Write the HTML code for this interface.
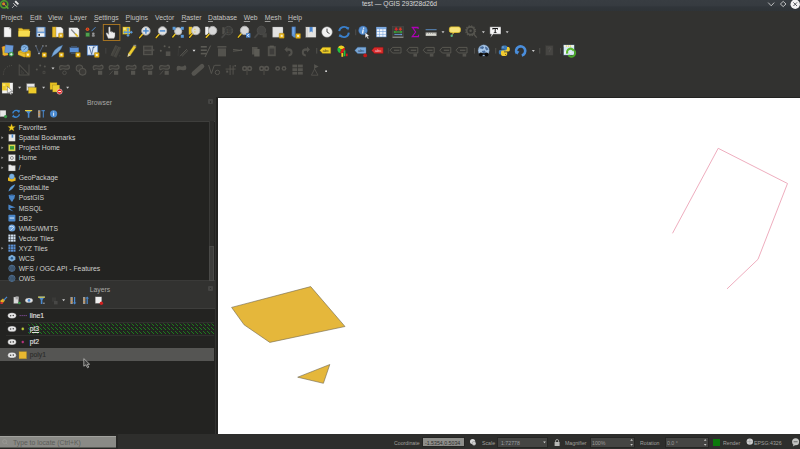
<!DOCTYPE html>
<html><head><meta charset="utf-8">
<style>
*{margin:0;padding:0;box-sizing:border-box}
html,body{width:800px;height:449px;overflow:hidden;background:#323230;font-family:"Liberation Sans",sans-serif}
.a{position:absolute}
.t{position:absolute;white-space:nowrap;line-height:10px;font-family:"Liberation Sans",sans-serif}
.mn{top:13.3px;font-size:6.8px;color:#c4c4c2}
.mn u{text-decoration-thickness:0.6px;text-underline-offset:1px;text-decoration-color:#9a9a98}
.bi{left:18.7px;font-size:6.8px;color:#cfcfcd}
.st{font-size:6.1px;transform:scaleX(0.86);transform-origin:0 0;top:437.8px}
svg{position:absolute;left:0;top:0;overflow:visible}
</style></head><body>
<!-- title bar -->
<div class="a" style="left:0;top:0;width:800px;height:11px;background:linear-gradient(#383d42 0,#363b40 5.5px,#30353a 7px,#2e3337 11px)"></div>
<span class="t" style="left:362px;top:-0.6px;font-size:6.7px;color:#d8d8d8">test — QGIS 293f28d26d</span>
<!-- menu bar -->
<span class="t mn" style="left:1px">Project</span><span class="t mn" style="left:30px"><u>E</u>dit</span><span class="t mn" style="left:48px"><u>V</u>iew</span><span class="t mn" style="left:70px"><u>L</u>ayer</span><span class="t mn" style="left:94px"><u>S</u>ettings</span><span class="t mn" style="left:125.6px"><u>P</u>lugins</span><span class="t mn" style="left:155px">Vec<u>t</u>or</span><span class="t mn" style="left:181.4px"><u>R</u>aster</span><span class="t mn" style="left:208px"><u>D</u>atabase</span><span class="t mn" style="left:243.8px"><u>W</u>eb</span><span class="t mn" style="left:264.8px"><u>M</u>esh</span><span class="t mn" style="left:288px"><u>H</u>elp</span>
<!-- dock panels -->
<div class="a" style="left:0;top:97px;width:217px;height:337px;background:#323230"></div>
<span class="t" style="left:87px;top:97.6px;font-size:6.8px;color:#a8a8a6">Browser</span>
<div class="a" style="left:208px;top:99.2px;width:5.2px;height:5.2px;background:#454543;border-radius:1px"></div><div class="a" style="left:210px;top:101.2px;width:1.4px;height:1.4px;background:#2e2e2c"></div>
<div class="a" style="left:0;top:120.6px;width:214.5px;height:160.6px;background:#232321;border-top:0.8px solid #3e3e3c;border-bottom:0.6px solid #3a3a38"></div>
<div class="a" style="left:208.8px;top:121.4px;width:5.3px;height:160px;background:#2c2c2a;border-left:0.5px solid #3a3a38"></div>
<div class="a" style="left:209.2px;top:246.4px;width:4.4px;height:34.4px;background:#3d3d3b;border:0.5px solid #4a4a48"></div>
<span class="t bi" style="top:123.10px">Favorites</span><span class="t bi" style="top:133.15px">Spatial Bookmarks</span><span class="t bi" style="top:143.20px">Project Home</span><span class="t bi" style="top:153.25px">Home</span><span class="t bi" style="top:163.30px">/</span><span class="t bi" style="top:173.35px">GeoPackage</span><span class="t bi" style="top:183.40px">SpatiaLite</span><span class="t bi" style="top:193.45px">PostGIS</span><span class="t bi" style="top:203.50px">MSSQL</span><span class="t bi" style="top:213.55px">DB2</span><span class="t bi" style="top:223.60px">WMS/WMTS</span><span class="t bi" style="top:233.65px">Vector Tiles</span><span class="t bi" style="top:243.70px">XYZ Tiles</span><span class="t bi" style="top:253.75px">WCS</span><span class="t bi" style="top:263.80px">WFS / OGC API - Features</span><span class="t bi" style="top:273.85px">OWS</span>
<span class="t" style="left:89.7px;top:284.6px;font-size:6.8px;color:#a8a8a6">Layers</span>
<div class="a" style="left:208px;top:285.5px;width:5.2px;height:5.2px;background:#454543;border-radius:1px"></div><div class="a" style="left:210px;top:287.5px;width:1.4px;height:1.4px;background:#2e2e2c"></div>
<div class="a" style="left:0;top:308px;width:214.5px;height:125.5px;background:#232321;border-top:0.8px solid #3e3e3c"></div>
<div class="a" style="left:6px;top:322.2px;width:208px;height:0.8px;background:#30302e"></div>
<div class="a" style="left:6px;top:334.6px;width:208px;height:0.8px;background:#30302e"></div>
<div class="a" style="left:6px;top:347.8px;width:208px;height:0.8px;background:#30302e"></div>
<div class="a" style="left:0;top:348.4px;width:213.8px;height:13px;background:#555553"></div>
<svg width="800" height="449"><defs><pattern id="gp" x="0" y="0" width="4" height="4" patternUnits="userSpaceOnUse"><rect width="4" height="4" fill="#222220"/><rect x="0" y="0" width="1" height="1" fill="#1e7a1e"/><rect x="1" y="1" width="1" height="1" fill="#1e7a1e"/><rect x="3" y="3" width="1" height="1" fill="#1e7a1e"/></pattern></defs>
<rect x="28" y="323.5" width="186.5" height="10.8" fill="url(#gp)"/>
</svg>
<span class="t" style="left:29.7px;top:310.6px;font-size:6.8px;color:#e2e2e0;-webkit-text-stroke:0.12px #e2e2e0">line1</span>
<span class="t" style="left:29.7px;top:323.9px;font-size:6.8px;color:#e2e2e0;-webkit-text-stroke:0.12px #e2e2e0;text-decoration:underline">pt3</span>
<span class="t" style="left:29.7px;top:337px;font-size:6.8px;color:#e2e2e0;-webkit-text-stroke:0.12px #e2e2e0">pt2</span>
<span class="t" style="left:29.7px;top:350.2px;font-size:6.8px;color:#2c2c2a;-webkit-text-stroke:0.1px #2c2c2a">poly1</span>
<!-- splitter + map -->
<div class="a" style="left:216.4px;top:96.9px;width:583.6px;height:337.1px;background:#232321"></div>
<div class="a" style="left:217.5px;top:97.6px;width:582.5px;height:336.4px;background:#ffffff"></div>
<svg width="800" height="449" viewBox="0 0 800 449">
<polygon points="231.6,307.4 310.7,286.6 345,326.5 269.8,342.4 244.1,324.8" fill="#e5b73b" stroke="#6e6650" stroke-width="0.6"/>
<polygon points="297.7,377.2 329.8,364.5 323.4,383.3" fill="#e5b73b" stroke="#6e6650" stroke-width="0.6"/>
<polyline points="672.5,233.3 718.2,148.3 787.5,183.5 758,259.3 727,288.9" fill="none" stroke="#eda9ba" stroke-width="0.95"/>
<path d="M3.8,26.9 L9.3,26.9 L11.4,29 L11.4,37.3 L3.8,37.3 Z" fill="#f4f4f4" stroke="#1a1a1a" stroke-width="0.4" />
<path d="M9.3,26.9 L9.3,29 L11.4,29" fill="#cfcfcf" stroke="#888" stroke-width="0.4" />
<path d="M18.4,28.2 L22,28.2 L23,29.2 L29.4,29.2 L29.4,36.6 L18.4,36.6 Z" fill="#e9c22e" stroke="#8a7010" stroke-width="0.4" />
<path d="M18.6,31 L30.2,31 L29.4,36.6 L18.4,36.6 Z" fill="#f6dc50" />
<rect x="36.2" y="26.9" width="9.3" height="10.1" rx="0.6" fill="#6a9ad2" stroke="#3a5a8a" stroke-width="0.4"/>
<rect x="37.6" y="27.6" width="6.5" height="4" rx="0" fill="#cdd2d8"/>
<rect x="37.4" y="33.2" width="6.9" height="3.4" rx="0" fill="#f2f2f2"/>
<rect x="38.4" y="34" width="1.6" height="1.8" rx="0" fill="#2a2a2a"/>
<rect x="52.2" y="26.9" width="5.2" height="10.3" rx="0" fill="#e9bd2c" stroke="#8a6a10" stroke-width="0.3"/>
<path d="M56,26.9 L61,26.9 L63.2,29 L63.2,37 L56,37 Z" fill="#f0f0f0" stroke="#555" stroke-width="0.3" />
<rect x="58.6" y="33.2" width="4.6" height="4.6" rx="0.6" fill="#e8b41a" stroke="#8a6a10" stroke-width="0.4"/>
<rect x="59.980000000000004" y="34.580000000000005" width="1.8399999999999999" height="1.8399999999999999" rx="0" fill="#f8f0c8"/>
<path d="M68.6,27.4 L77.2,27.4 L79.3,29.5 L79.3,37.2 L68.6,37.2 Z" fill="#f0f0f0" stroke="#222" stroke-width="0.4" />
<line x1="71.2" y1="29.5" x2="77.6" y2="36.4" stroke="#8a8a8a" stroke-width="1.3" stroke-linecap="butt"/>
<line x1="75.3" y1="33.8" x2="77.8" y2="36.6" stroke="#e6c020" stroke-width="1.6" stroke-linecap="butt"/>
<circle cx="87.5" cy="29.2" r="1.8" fill="#e06020"/>
<rect x="86.8" y="28.3" width="1.4" height="1.8" rx="0" fill="#c02020"/>
<line x1="91.5" y1="31.2" x2="95.5" y2="27.2" stroke="#4a8ad0" stroke-width="1" stroke-linecap="butt"/>
<rect x="85.8" y="32.8" width="3.8" height="3.8" rx="0" fill="#50a050" stroke="#2a6a2a" stroke-width="0.3"/>
<circle cx="93.3" cy="33.7" r="1.3" fill="#9a9a9a"/>
<rect x="91.8" y="34.8" width="3" height="2" rx="0.8" fill="#8a8a8a"/>
<rect x="101.3" y="29.6" width="1.2" height="4.8" rx="0" fill="#3e3e3c"/>
<rect x="103.3" y="24.5" width="16.6" height="16" rx="0" fill="#2b2b29" stroke="#b07a22" stroke-width="0.9"/>
<path d="M108.2,38.4 L106.2,34 C105.8,33.2 106.8,32.4 107.6,33.2 L108.6,34.4 L108.6,27.6 C108.6,26.6 110.2,26.6 110.2,27.6 L110.2,31.8 C110.4,31 111.8,31 111.8,31.8 L111.8,32.4 C112,31.6 113.4,31.6 113.4,32.4 L113.4,33 C113.6,32.2 115,32.2 115,33 L115,35.8 C115,37 114.4,37.8 114,38.4 Z" fill="#ececec" stroke="#7a7a7a" stroke-width="0.35" />
<rect x="122.7" y="26.9" width="7.4" height="7.4" rx="0" fill="#eccb2c" stroke="#6a5a10" stroke-width="0.3"/>
<rect x="123.4" y="27.6" width="2.4" height="2.4" rx="0" fill="#f6e27a"/>
<path d="M123.1,32.2 L125.1,30.400000000000002 L125.1,31.500000000000004 L127.3,31.500000000000004 L127.3,29.400000000000002 L126.2,29.400000000000002 L128,27.400000000000002 L129.8,29.400000000000002 L128.7,29.400000000000002 L128.7,31.500000000000004 L130.9,31.500000000000004 L130.9,30.400000000000002 L132.9,32.2 L130.9,34.0 L130.9,32.900000000000006 L128.7,32.900000000000006 L128.7,35.0 L129.8,35.0 L128,37.0 L126.2,35.0 L127.3,35.0 L127.3,32.900000000000006 L125.1,32.900000000000006 L125.1,34.0 Z" fill="#5b9ad8" />
<line x1="142.75" y1="34.05" x2="139.39000000000001" y2="37.83" stroke="#2a2518" stroke-width="2.4" stroke-linecap="round"/>
<line x1="142.54" y1="34.26" x2="139.6" y2="37.62" stroke="#e6c020" stroke-width="1.5" stroke-linecap="round"/>
<circle cx="145.9" cy="30.9" r="4.2" fill="#e2e2e2" stroke="#b4b4b4" stroke-width="0.9"/>
<rect x="143.1" y="30.2" width="5.6" height="1.4" rx="0" fill="#4a8ad0"/>
<rect x="145.2" y="28.1" width="1.4" height="5.6" rx="0" fill="#4a8ad0"/>
<line x1="159.35" y1="34.05" x2="155.99" y2="37.83" stroke="#2a2518" stroke-width="2.4" stroke-linecap="round"/>
<line x1="159.14" y1="34.26" x2="156.2" y2="37.62" stroke="#e6c020" stroke-width="1.5" stroke-linecap="round"/>
<circle cx="162.5" cy="30.9" r="4.2" fill="#e2e2e2" stroke="#b4b4b4" stroke-width="0.9"/>
<rect x="159.8" y="30.2" width="5.4" height="1.4" rx="0" fill="#4a8ad0"/>
<line x1="175.5" y1="33.9" x2="172.61999999999998" y2="37.14" stroke="#2a2518" stroke-width="2.4" stroke-linecap="round"/>
<line x1="175.32" y1="34.08" x2="172.79999999999998" y2="36.96" stroke="#e6c020" stroke-width="1.5" stroke-linecap="round"/>
<circle cx="178.2" cy="31.2" r="3.6" fill="#d6d6d6" stroke="#b4b4b4" stroke-width="0.9"/>
<rect x="172.6" y="26.8" width="3" height="3" rx="0" fill="#5a9ad8"/>
<rect x="180.8" y="26.8" width="3" height="3" rx="0" fill="#5a9ad8"/>
<rect x="180.8" y="34.8" width="3" height="3" rx="0" fill="#5a9ad8"/>
<rect x="188.8" y="26.8" width="3.2" height="7.8" rx="0" fill="#e8c020"/>
<line x1="192.72500000000002" y1="33.675000000000004" x2="189.44500000000002" y2="37.365" stroke="#2a2518" stroke-width="2.4" stroke-linecap="round"/>
<line x1="192.52" y1="33.88" x2="189.65" y2="37.160000000000004" stroke="#e6c020" stroke-width="1.5" stroke-linecap="round"/>
<circle cx="195.8" cy="30.6" r="4.1" fill="#dcdcd6" stroke="#b4b4b4" stroke-width="0.9"/>
<rect x="194.4" y="28.8" width="1" height="1" rx="0" fill="#e8c020"/>
<rect x="194.4" y="31.5" width="1" height="1" rx="0" fill="#e8c020"/>
<rect x="205.2" y="26.8" width="3.4" height="8" rx="0" fill="#eeeeee"/>
<line x1="209.45" y1="33.75" x2="206.09" y2="37.53" stroke="#2a2518" stroke-width="2.4" stroke-linecap="round"/>
<line x1="209.23999999999998" y1="33.96" x2="206.29999999999998" y2="37.32" stroke="#e6c020" stroke-width="1.5" stroke-linecap="round"/>
<circle cx="212.6" cy="30.6" r="4.2" fill="#d8d8d8" stroke="#b4b4b4" stroke-width="0.9"/>
<rect x="222.3" y="27.2" width="2.2" height="7" rx="0" fill="#53524d"/>
<line x1="225.35" y1="33.75" x2="221.99" y2="37.53" stroke="#3a3a38" stroke-width="2.4" stroke-linecap="round"/>
<line x1="225.14" y1="33.96" x2="222.2" y2="37.32" stroke="#4a4a48" stroke-width="1.5" stroke-linecap="round"/>
<circle cx="228.5" cy="30.6" r="4.2" fill="#3a3a38" stroke="#4e4e4c" stroke-width="0.9"/>
<text x="226" y="32.6" font-size="5" fill="#53524d" font-family="Liberation Sans">1:1</text>
<line x1="241.45" y1="33.55" x2="238.09" y2="37.33" stroke="#2a2518" stroke-width="2.4" stroke-linecap="round"/>
<line x1="241.23999999999998" y1="33.76" x2="238.29999999999998" y2="37.12" stroke="#e6c020" stroke-width="1.5" stroke-linecap="round"/>
<circle cx="244.6" cy="30.4" r="4.2" fill="#d6d6d6" stroke="#b4b4b4" stroke-width="0.9"/>
<rect x="246" y="33.2" width="4.4" height="4.4" rx="0" fill="#4a86d0"/>
<path d="M249.2,34.1 L247.2,35.4 L249.2,36.7" fill="none" stroke="#fff" stroke-width="0.8" />
<line x1="258.25" y1="33.55" x2="254.89" y2="37.33" stroke="#3a3a38" stroke-width="2.4" stroke-linecap="round"/>
<line x1="258.03999999999996" y1="33.76" x2="255.09999999999997" y2="37.12" stroke="#4a4a48" stroke-width="1.5" stroke-linecap="round"/>
<circle cx="261.4" cy="30.4" r="4.2" fill="#444442" stroke="#4e4e4c" stroke-width="0.9"/>
<rect x="262.6" y="33.2" width="4.2" height="4.2" rx="0" fill="#474744"/>
<path d="M272.6,27 L282.4,27 L283,27.6 L283,37.2 L272.6,37.2 Z" fill="#e2e2e2" stroke="#999" stroke-width="0.3" />
<rect x="279.2" y="33.3" width="5" height="5" rx="0.6" fill="#e8b41a" stroke="#8a6a10" stroke-width="0.4"/>
<rect x="280.7" y="34.8" width="2.0" height="2.0" rx="0" fill="#f8f0c8"/>
<path d="M291.8,26.8 L295.6,26.8 L295.6,34.6 L297.4,36.4 L297.4,37.6 L294,37.6 L291.8,35.6 Z" fill="#5b90d4" stroke="#3a6aa8" stroke-width="0.3" />
<rect x="292.6" y="27.4" width="1.2" height="7" rx="0" fill="#7aaae0"/>
<rect x="295.6" y="33.4" width="5" height="5" rx="0.6" fill="#e8b41a" stroke="#8a6a10" stroke-width="0.4"/>
<rect x="297.1" y="34.9" width="2.0" height="2.0" rx="0" fill="#f8f0c8"/>
<rect x="305.8" y="27" width="10.2" height="10.3" rx="0" fill="#e4e4e2" stroke="#888" stroke-width="0.3"/>
<rect x="306.4" y="27.4" width="1.4" height="9.6" rx="0" fill="#cfcfcd"/>
<path d="M309.6,27 L312.6,27 L312.6,32.6 L311.1,31.2 L309.6,32.6 Z" fill="#4a86d0" />
<circle cx="327" cy="32" r="5.3" fill="#f2f2f2" stroke="#8a8a8a" stroke-width="0.5"/>
<path d="M327,28.6 L327,32 L329.5,33.6" fill="none" stroke="#222" stroke-width="0.8" />
<path d="M339.2,31.2 A4.8,4.8 0 0 1 347.6,28.6" fill="none" stroke="#3a80cc" stroke-width="1.9" />
<path d="M348.8,32.6 A4.8,4.8 0 0 1 340.4,35.4" fill="none" stroke="#3a80cc" stroke-width="1.9" />
<path d="M346.2,26.6 L349.4,27.4 L348,30.4 Z" fill="#3a80cc" />
<path d="M341.8,37.4 L338.6,36.6 L340,33.6 Z" fill="#3a80cc" />
<rect x="355.2" y="29.4" width="1" height="5.8" rx="0" fill="#4e4e4c"/>
<circle cx="363" cy="30.4" r="4.4" fill="#5a92d2" stroke="#2a5a9a" stroke-width="0.4"/>
<path d="M362.6,29.6 L363.8,29.6 L363.2,33.4 L362,33.4 Z" fill="#fff" />
<circle cx="363.6" cy="28.2" r="0.65" fill="#fff"/>
<path d="M365.2,32.4 L365.2,38 L366.6,36.7 L367.8,39 L368.8,38.5 L367.6,36.2 L369.4,36 Z" fill="#f4f4f4" stroke="#333" stroke-width="0.3" />
<rect x="376.2" y="26.9" width="10.3" height="10.3" rx="0" fill="#6a9ad6"/>
<rect x="376.8" y="29.2" width="2.7" height="2.1" rx="0" fill="#f2f6fc"/>
<rect x="380.0" y="29.2" width="2.7" height="2.1" rx="0" fill="#f2f6fc"/>
<rect x="383.2" y="29.2" width="2.7" height="2.1" rx="0" fill="#f2f6fc"/>
<rect x="376.8" y="31.849999999999998" width="2.7" height="2.1" rx="0" fill="#f2f6fc"/>
<rect x="380.0" y="31.849999999999998" width="2.7" height="2.1" rx="0" fill="#f2f6fc"/>
<rect x="383.2" y="31.849999999999998" width="2.7" height="2.1" rx="0" fill="#f2f6fc"/>
<rect x="376.8" y="34.5" width="2.7" height="2.1" rx="0" fill="#f2f6fc"/>
<rect x="380.0" y="34.5" width="2.7" height="2.1" rx="0" fill="#f2f6fc"/>
<rect x="383.2" y="34.5" width="2.7" height="2.1" rx="0" fill="#f2f6fc"/>
<rect x="376.6" y="27.4" width="9.5" height="1.2" rx="0" fill="#8ab4e4"/>
<rect x="392.6" y="26.6" width="10.8" height="11" rx="0" fill="#3c3c3a" stroke="#4e4e4a" stroke-width="0.5"/>
<path d="M395.2,27.6 L397.2,27.6 L397.2,29 L398.2,29 L396.2,31 L394.2,29 L395.2,29 Z" fill="#d82a2a" />
<path d="M399.4,27.6 L401.4,27.6 L401.4,29 L402.4,29 L400.4,31 L398.4,29 L399.4,29 Z" fill="#d83a2a" />
<rect x="394.4" y="31.4" width="7.2" height="1.2" rx="0" fill="#3aa83a"/>
<path d="M393.4,32 L395.4,30.6 L395.4,33.4 Z M402.6,32 L400.6,30.6 L400.6,33.4 Z" fill="#3aa83a" />
<rect x="394.4" y="34.2" width="7.2" height="0.8" rx="0" fill="#6aa0e0"/>
<path d="M402.4,34.6 L400.8,33.6 L400.8,35.6 Z" fill="#6aa0e0" />
<rect x="392.6" y="36.6" width="10.8" height="1.3" rx="0" fill="#8a8a86"/>
<path d="M411.6,27.4 L418,27.4 L418.2,29 M417.6,27.6 L412.6,27.6 L415.6,32 L412.2,36.6 L418.4,36.6 L418.6,34.8" fill="none" stroke="#b000b8" stroke-width="1.15" />
<rect x="425.6" y="29.2" width="11" height="1" rx="0" fill="#5a8ac0"/>
<rect x="425.6" y="32.4" width="11" height="3.6" rx="0" fill="#dadad2" stroke="#444" stroke-width="0.3"/>
<rect x="426.6" y="32.5" width="0.45" height="1.4" rx="0" fill="#666"/>
<rect x="428.40000000000003" y="32.5" width="0.45" height="1.4" rx="0" fill="#666"/>
<rect x="430.20000000000005" y="32.5" width="0.45" height="1.4" rx="0" fill="#666"/>
<rect x="432.0" y="32.5" width="0.45" height="1.4" rx="0" fill="#666"/>
<rect x="433.8" y="32.5" width="0.45" height="1.4" rx="0" fill="#666"/>
<rect x="435.6" y="32.5" width="0.45" height="1.4" rx="0" fill="#666"/>
<path d="M441.5,31.299999999999997 L444.5,31.299999999999997 L443,33.3 Z" fill="#c8c8c8" />
<rect x="449.4" y="26.9" width="11" height="5.6" rx="1.8" fill="#f6e27a" stroke="#e8c830" stroke-width="0.8"/>
<path d="M452.8,32.2 L454.6,32.2 L452.2,35.2 Z" fill="#f0d050" />
<circle cx="451.7" cy="35.8" r="1.2" fill="#5ab080"/>
<circle cx="470.6" cy="30.8" r="3.9" fill="none" stroke="#56554f" stroke-width="1.7"/>
<circle cx="470.6" cy="30.8" r="4.9" fill="none" stroke="#56554f" stroke-width="1.2" stroke-dasharray="1.3 1.25"/>
<circle cx="470.6" cy="30.8" r="1.3" fill="#56554f"/>
<line x1="473.6" y1="34" x2="476.8" y2="37.6" stroke="#56554f" stroke-width="1.3" stroke-linecap="butt"/>
<path d="M481.9,31.299999999999997 L484.9,31.299999999999997 L483.4,33.3 Z" fill="#c8c8c8" />
<path d="M489.8,26.8 L501,26.8 L501,34.2 L493.2,34.2 L490.2,38.2 L491.4,34.2 L489.8,34.2 Z" fill="#f6f6f6" stroke="#1a1a1a" stroke-width="0.4" />
<rect x="492.6" y="28" width="5.2" height="1" rx="0" fill="#151515"/>
<rect x="492.6" y="28" width="0.7" height="1.8" rx="0" fill="#151515"/>
<rect x="497.1" y="28" width="0.7" height="1.8" rx="0" fill="#151515"/>
<rect x="494.7" y="28" width="1" height="4.8" rx="0" fill="#151515"/>
<rect x="493.8" y="32.2" width="2.8" height="0.7" rx="0" fill="#151515"/>
<path d="M505.7,31.299999999999997 L508.7,31.299999999999997 L507.2,33.3 Z" fill="#c8c8c8" />
<path d="M1.6,47 L5.6,45.6 L8,55 L3.8,56.2 Z" fill="#e07030" />
<rect x="2.6" y="46.6" width="5.2" height="8.6" rx="0" fill="#e8b828"/>
<path d="M5.4,44.8 L13.4,45.6 L12.6,53.4 L4.6,52.6 Z" fill="#6a9ad8" stroke="#3a5a90" stroke-width="0.3" />
<circle cx="11.2" cy="54.2" r="2.4" fill="#3a9a4a"/>
<rect x="9.8" y="53.8" width="2.8" height="0.8" rx="0" fill="#fff"/>
<rect x="10.8" y="52.8" width="0.8" height="2.8" rx="0" fill="#fff"/>
<path d="M18,51.4 L24.4,48.6 L30.6,51 L30.6,55.6 L24.2,57.2 L18,54.8 Z" fill="#e9bd2c" stroke="#8a6a10" stroke-width="0.3" />
<path d="M18,51.4 L24.2,53.6 L30.6,51" fill="none" stroke="#8a6a10" stroke-width="0.3" />
<circle cx="24.6" cy="48.4" r="3.7" fill="#8ab8e6" stroke="#3a6aa0" stroke-width="0.4"/>
<path d="M22.6,47.2 Q24.6,45.8 26.4,47.6 Q25,49.4 23.4,50.2" fill="none" stroke="#2a5a90" stroke-width="0.6" />
<rect x="25.4" y="52.2" width="5" height="5" rx="0.6" fill="#e8b41a" stroke="#8a6a10" stroke-width="0.4"/>
<rect x="26.9" y="53.7" width="2.0" height="2.0" rx="0" fill="#f8f0c8"/>
<rect x="35.2" y="45.2" width="1.4" height="1.4" rx="0" fill="#8a8a8a"/>
<rect x="42.2" y="45.2" width="1.4" height="1.4" rx="0" fill="#8a8a8a"/>
<rect x="45.4" y="45.2" width="1.4" height="1.4" rx="0" fill="#8a8a8a"/>
<path d="M36,46 L39,53.6 L42.8,46" fill="none" stroke="#5a7090" stroke-width="0.7" />
<rect x="38.4" y="53" width="1.2" height="1.2" rx="0" fill="#ddd"/>
<rect x="42" y="52.6" width="4.6" height="4.6" rx="0.6" fill="#e8b41a" stroke="#8a6a10" stroke-width="0.4"/>
<rect x="43.38" y="53.980000000000004" width="1.8399999999999999" height="1.8399999999999999" rx="0" fill="#f8f0c8"/>
<path d="M51.6,57 Q53.4,48 62.6,45.2 Q61,50.4 56.6,53.4 Q54.4,54.8 52.2,56.6 Z" fill="#7aa8d8" stroke="#3a6aa0" stroke-width="0.4" />
<rect x="59" y="52.4" width="4.8" height="4.8" rx="0.6" fill="#e8b41a" stroke="#8a6a10" stroke-width="0.4"/>
<rect x="60.44" y="53.839999999999996" width="1.92" height="1.92" rx="0" fill="#f8f0c8"/>
<rect x="69.8" y="47.6" width="9" height="4.6" rx="0" fill="#5b90d4" stroke="#3a5a90" stroke-width="0.3"/>
<rect x="71" y="46.2" width="6" height="0.6" rx="0" fill="#4a6a90"/>
<rect x="71" y="53.3" width="6" height="0.5" rx="0" fill="#4a6a90"/>
<rect x="75.6" y="52.4" width="4.8" height="4.8" rx="0.6" fill="#e8b41a" stroke="#8a6a10" stroke-width="0.4"/>
<rect x="77.03999999999999" y="53.839999999999996" width="1.92" height="1.92" rx="0" fill="#f8f0c8"/>
<rect x="87" y="45.2" width="11" height="10.2" rx="0" fill="#6a9ad8" stroke="#2a4a80" stroke-width="0.4"/>
<rect x="87.8" y="46" width="9.4" height="8.6" rx="0" fill="#dce8f6"/>
<path d="M89.4,47.2 L91.6,54.4 L93.6,46.4 M92.6,48 L95.4,46.6" fill="none" stroke="#2a4a80" stroke-width="0.7" />
<rect x="94.4" y="52.6" width="4.8" height="4.8" rx="0.6" fill="#e8b41a" stroke="#8a6a10" stroke-width="0.4"/>
<rect x="95.84" y="54.04" width="1.92" height="1.92" rx="0" fill="#f8f0c8"/>
<rect x="105.4" y="48" width="0.9" height="5.6" rx="0" fill="#474644"/>
<path d="M110.4,55.4 L115.4,45 L118.2,46.2 L113.2,56.6 Z M113.6,56.8 L118.4,46.4 L121.2,47.6 L116.4,57.8 Z" fill="#45443f" />
<path d="M111.4,54.6 L115.8,45.6 M114.6,56 L119,46.8" fill="none" stroke="#53524c" stroke-width="0.5" />
<rect x="119" y="55.6" width="1.4" height="0.6" rx="0" fill="#4a4a48"/>
<path d="M127.6,56.8 L128.2,53.4 L133.8,45.2 L136.4,46.8 L130.6,55.2 Z" fill="#eccc30" stroke="#6a5a20" stroke-width="0.4" />
<path d="M127.6,56.8 L128.2,53.4 L130.6,55.2 Z" fill="#d8d0b8" />
<rect x="133.6" y="44.8" width="2.6" height="1.4" rx="0" fill="#8a8a8a"/>
<rect x="143" y="45.6" width="10" height="9.6" rx="0" fill="#53524d"/>
<rect x="144.4" y="46.8" width="7" height="2.8" rx="0" fill="#3e3d3a"/>
<rect x="144.4" y="51" width="7" height="3" rx="0" fill="#3e3d3a"/>
<path d="M153,49 L155,50 L153,51 Z" fill="#53524d" />
<circle cx="164.6" cy="46.3" r="1" fill="#5c5b55"/>
<circle cx="169.2" cy="47.2" r="1" fill="#5c5b55"/>
<circle cx="160.8" cy="50.7" r="1" fill="#5c5b55"/>
<rect x="165.8" y="51.4" width="4.6" height="4.6" rx="0" fill="#53524d"/>
<circle cx="179.6" cy="47" r="1.1" fill="#5c5b55"/>
<line x1="180.2" y1="56.2" x2="186.8" y2="49.2" stroke="#5c5b55" stroke-width="1" stroke-linecap="butt"/>
<line x1="182.2" y1="56.2" x2="188" y2="50.4" stroke="#5c5b55" stroke-width="0.8" stroke-linecap="butt"/>
<line x1="178.6" y1="48.4" x2="178" y2="56" stroke="#434240" stroke-width="0.5" stroke-linecap="butt"/>
<path d="M192.5,49.8 L195.5,49.8 L194,51.8 Z" fill="#e0e0e0" />
<rect x="200.8" y="46.0" width="6" height="1.6" rx="0" fill="#5c5b55"/>
<rect x="200.8" y="49.4" width="6" height="1.6" rx="0" fill="#5c5b55"/>
<rect x="200.8" y="52.8" width="6" height="1.6" rx="0" fill="#5c5b55"/>
<line x1="205" y1="57" x2="210.6" y2="45.6" stroke="#5c5b55" stroke-width="1" stroke-linecap="butt"/>
<rect x="217.4" y="46" width="9" height="1.6" rx="0" fill="#53524d"/>
<rect x="218" y="48.4" width="8" height="8" rx="0" fill="#53524d"/>
<line x1="233" y1="49.4" x2="240.6" y2="50.4" stroke="#5c5b55" stroke-width="0.9" stroke-linecap="butt"/>
<line x1="233" y1="51.2" x2="240.6" y2="50.4" stroke="#5c5b55" stroke-width="0.9" stroke-linecap="butt"/>
<circle cx="241.4" cy="50" r="0.9" fill="#5c5b55"/>
<rect x="252" y="47" width="5.5" height="7.5" rx="0" fill="#53524d"/>
<rect x="254.2" y="49" width="5.4" height="7.5" rx="0" fill="#5c5b55"/>
<rect x="267.8" y="46.2" width="8" height="10" rx="0" fill="#53524d"/>
<rect x="269.6" y="45.6" width="4.2" height="1.6" rx="0" fill="#5c5b55"/>
<rect x="269.6" y="48.6" width="4.6" height="5.8" rx="0" fill="#3e3d3b"/>
<path d="M284.4,49.6 L287.4,46.6 L287.4,48.4 Q292.6,48 292.6,52.4 Q292.6,56 288.6,56.4 L288.6,54.6 Q290.6,54.2 290.6,52.2 Q290.4,50.4 287.4,50.8 L287.4,52.6 Z" fill="#53524d" />
<path d="M310,49.6 L307,46.6 L307,48.4 Q301.8,48 301.8,52.4 Q301.8,56 305.8,56.4 L305.8,54.6 Q303.8,54.2 303.8,52.2 Q304,50.4 307,50.8 L307,52.6 Z" fill="#53524d" />
<rect x="316.3" y="48" width="0.9" height="5.6" rx="0" fill="#555452"/>
<path d="M319.8,50.4 L322.6,47.2 L330.8,47.2 L330.8,53.4 L322.6,53.4 Z" fill="#f2d028" stroke="#6a5a10" stroke-width="0.4" />
<text x="322.6" y="51.9" font-size="4" fill="#3a3a20" font-family="Liberation Sans">abc</text>
<path d="M341.2,49.4 L337.91,47.50 A3.8,3.8 0 0 1 344.77,48.10 Z" fill="#f0d020" />
<path d="M341.2,49.4 L344.77,48.10 A3.8,3.8 0 0 1 339.90,52.97 Z" fill="#e01818" />
<path d="M341.2,49.4 L339.90,52.97 A3.8,3.8 0 0 1 337.91,47.50 Z" fill="#20c040" />
<rect x="341.4" y="53" width="1.8" height="3.8" rx="0" fill="#f0d020"/>
<rect x="343.8" y="50.4" width="1.6" height="5.8" rx="0" fill="#20c040"/>
<rect x="346" y="53.6" width="1.6" height="2.6" rx="0" fill="#e01818"/>
<path d="M354.8,50.4 L357.6,47.2 L366,47.2 L366,53.4 L357.6,53.4 Z" fill="#7aa8d8" stroke="#3a6aa0" stroke-width="0.4" />
<text x="358" y="51.9" font-size="4" fill="#1a3050" font-family="Liberation Sans">abc</text>
<circle cx="365.2" cy="55.4" r="1.9" fill="#c01818"/>
<path d="M371.6,50.4 L374.4,47.2 L383.2,47.2 L383.2,53.6 L374.4,53.6 Z" fill="#d82a2a" stroke="#7a1010" stroke-width="0.4" />
<text x="375" y="52" font-size="4" fill="#f8d8d8" font-family="Liberation Sans">abc</text>
<path d="M390,50.2 L392.6,47.4 L401,47.4 L401,53 L392.6,53 Z" fill="none" stroke="#5c5b55" stroke-width="0.9" />
<rect x="394" y="49.6" width="5.4" height="1.4" rx="0" fill="#53524d"/>
<path d="M406.8,50.2 L409.40000000000003,47.4 L417.8,47.4 L417.8,53 L409.40000000000003,53 Z" fill="none" stroke="#5c5b55" stroke-width="0.9" />
<rect x="410.8" y="49.6" width="5.4" height="1.4" rx="0" fill="#53524d"/>
<rect x="413.40000000000003" y="53.6" width="3.6" height="3" rx="0" fill="#53524d"/>
<path d="M423.2,50.2 L425.8,47.4 L434.2,47.4 L434.2,53 L425.8,53 Z" fill="none" stroke="#5c5b55" stroke-width="0.9" />
<rect x="427.2" y="49.6" width="5.4" height="1.4" rx="0" fill="#53524d"/>
<rect x="429.8" y="53.6" width="3.6" height="3" rx="0" fill="#53524d"/>
<path d="M439.8,50.2 L442.40000000000003,47.4 L450.8,47.4 L450.8,53 L442.40000000000003,53 Z" fill="none" stroke="#5c5b55" stroke-width="0.9" />
<rect x="443.8" y="49.6" width="5.4" height="1.4" rx="0" fill="#53524d"/>
<rect x="446.40000000000003" y="53.6" width="3.6" height="3" rx="0" fill="#53524d"/>
<path d="M456,50.2 L458.6,47.4 L467,47.4 L467,53 L458.6,53 Z" fill="none" stroke="#5c5b55" stroke-width="0.9" />
<rect x="460" y="49.6" width="5.4" height="1.4" rx="0" fill="#53524d"/>
<rect x="462.6" y="53.6" width="3.6" height="3" rx="0" fill="#53524d"/>
<rect x="387.9" y="48" width="0.9" height="5.6" rx="0" fill="#474644"/>
<rect x="474" y="48" width="0.9" height="5.6" rx="0" fill="#555452"/>
<circle cx="483.7" cy="50.4" r="5.6" fill="#a8c6e6" stroke="#5a7aa0" stroke-width="0.4"/>
<path d="M479.4,48.4 Q480.6,46 483,46.2 L484.2,47.6 L482.6,49.2 L481,48.6 Z M485,46.4 Q487.6,47 488.4,49.4 L486.6,50.6 L485.4,49 Z M481.8,51 L484.8,50.6 L486,52.4 L483,53.4 Z" fill="#4a6e9e" />
<circle cx="480.9" cy="54.6" r="2" fill="#0e0e0e"/>
<circle cx="486.5" cy="54.6" r="2" fill="#0e0e0e"/>
<rect x="481" y="53.2" width="5.5" height="1.6" rx="0" fill="#0e0e0e"/>
<rect x="495.3" y="48" width="0.9" height="5.6" rx="0" fill="#555452"/>
<path d="M504.4,45.6 C501.2,45.6 501.4,46.8 501.4,48.4 L501.4,49.4 L504.6,49.4 L504.6,50 L500.2,50 C498.8,50 498.8,51.4 498.8,52.6 C498.8,54.2 499.6,54.6 500.6,54.6 L501.6,54.6 L501.6,53 C501.6,51.8 502.4,51.2 503.4,51.2 L506.2,51.2 C507.2,51.2 507.6,50.6 507.6,49.6 L507.6,47.4 C507.6,46 506.4,45.6 504.4,45.6 Z" fill="#3d7ab8" />
<path d="M504.2,56 C507.4,56 507.2,54.8 507.2,53.2 L507.2,52.2 L504,52.2 L504,51.6 L508.4,51.6 C509.8,51.6 509.8,50.2 509.8,49 C509.8,47.4 509,47 508,47 L507,47 L507,48.6 C507,49.8 506.2,50.4 505.2,50.4 L502.4,50.4 C501.4,50.4 501,51 501,52 L501,54.2 C501,55.6 502.2,56 504.2,56 Z" fill="#f2cc30" />
<circle cx="503" cy="47" r="0.5" fill="#e8eef4"/>
<circle cx="505.6" cy="54.6" r="0.5" fill="#5a4a10"/>
<path d="M516.9,53.6 A4.6,4.6 0 1 1 521.8,55.4" fill="none" stroke="#4a8edc" stroke-width="2.6" />
<path d="M515.4,50.6 L519.4,51.4 L517.2,54.8 Z" fill="#4a8edc" />
<path d="M531.8,50 L534.8,50 L533.3,52 Z" fill="#c8c8c8" />
<rect x="539.3" y="48" width="0.9" height="5.6" rx="0" fill="#555452"/>
<rect x="545.6" y="45.6" width="7.5" height="9.7" rx="0" fill="#464542" stroke="#3a3a38" stroke-width="0.4"/>
<path d="M547.8,48.6 Q549.4,47 551,48.4 Q551,50 549.4,50.6 L549.4,52" fill="none" stroke="#555450" stroke-width="0.8" />
<rect x="560" y="48" width="0.9" height="5.6" rx="0" fill="#555452"/>
<rect x="563.4" y="44.8" width="11" height="10.4" rx="0" fill="#d4e6f4" stroke="#2a3a4a" stroke-width="0.5"/>
<rect x="563.8" y="45.2" width="10.2" height="1.6" rx="0" fill="#eef2e8"/>
<circle cx="566.4" cy="46" r="0.6" fill="#e8c020"/>
<circle cx="568.4" cy="46" r="0.6" fill="#e8c020"/>
<circle cx="570.4" cy="46" r="0.6" fill="#e8c020"/>
<path d="M564,52 L567,49.4 L569,51 L564,54.6 Z" fill="#f2f6fa" />
<path d="M567.4,53.6 A3.4,3.4 0 0 1 573.8,50.8" fill="none" stroke="#5ab82a" stroke-width="2.2" />
<path d="M574.4,50.6 A3.4,3.4 0 0 1 568.4,55.2" fill="none" stroke="#4aa82a" stroke-width="2" />
<circle cx="570.8" cy="52.4" r="0.9" fill="#f0f0f0"/>
<path d="M3.4,74.6 Q3.6,66.4 12,65.4" fill="none" stroke="#5a5954" stroke-width="0.9" stroke-dasharray="0.9 1.3"/>
<path d="M19.2,64.6 L19.2,75 L29,75 L29,64.6 M19.4,64.8 L28.8,74.6" fill="none" stroke="#4f4e49" stroke-width="1.1" />
<path d="M21.2,70.4 L21.2,73.2 L24,73.2 Z" fill="none" stroke="#4a4945" stroke-width="0.6" />
<circle cx="36.8" cy="69.6" r="1" fill="#575651"/>
<circle cx="40.2" cy="65.6" r="1" fill="#575651"/>
<circle cx="44.8" cy="66.6" r="1" fill="#575651"/>
<circle cx="44" cy="72.4" r="1.6" fill="#52514c"/>
<rect x="42" y="72" width="4" height="0.8" rx="0" fill="#3a3a37"/>
<rect x="43.6" y="70.4" width="0.8" height="4" rx="0" fill="#3a3a37"/>
<path d="M51.5,67.6 L54.5,67.6 L53,69.6 Z" fill="#d0d0d0" />
<path d="M59.6,67.39999999999999 Q59.6,65.19999999999999 62.85,65.72 Q65.6,66.83999999999999 67.8,65.16 Q69.4,65.19999999999999 69.4,67.39999999999999 Q69.4,69.6 65.6,69.08 Q62.3,68.24 60.65,69.64 Q59.6,69.6 59.6,67.39999999999999 Z" fill="#3b3a37" stroke="#55544f" stroke-width="1.2" />
<circle cx="64.5" cy="72.8" r="1.8" fill="none" stroke="#55544f" stroke-width="0.8"/>
<circle cx="79.4" cy="68.2" r="3.2" fill="#3b3a37" stroke="#55544f" stroke-width="1.1"/>
<circle cx="82.6" cy="71.8" r="3.3" fill="#3b3a37" stroke="#55544f" stroke-width="1.1"/>
<path d="M93.19999999999999,67.39999999999999 Q93.19999999999999,65.19999999999999 96.44999999999999,65.72 Q99.19999999999999,66.83999999999999 101.39999999999999,65.16 Q103.0,65.19999999999999 103.0,67.39999999999999 Q103.0,69.6 99.19999999999999,69.08 Q95.89999999999999,68.24 94.25,69.64 Q93.19999999999999,69.6 93.19999999999999,67.39999999999999 Z" fill="#3b3a37" stroke="#55544f" stroke-width="1.2" />
<rect x="98" y="70.8" width="4.2" height="4" rx="0" fill="#55544f"/>
<path d="M109.19999999999999,67.39999999999999 Q109.19999999999999,65.19999999999999 112.44999999999999,65.72 Q115.19999999999999,66.83999999999999 117.39999999999999,65.16 Q119.0,65.19999999999999 119.0,67.39999999999999 Q119.0,69.6 115.19999999999999,69.08 Q111.89999999999999,68.24 110.25,69.64 Q109.19999999999999,69.6 109.19999999999999,67.39999999999999 Z" fill="#3b3a37" stroke="#55544f" stroke-width="1.2" />
<rect x="114" y="70.8" width="4.2" height="4" rx="0" fill="#55544f"/>
<line x1="109.6" y1="74.6" x2="113" y2="70.6" stroke="#55544f" stroke-width="0.8" stroke-linecap="butt"/>
<path d="M126.19999999999999,67.39999999999999 Q126.19999999999999,65.19999999999999 129.45,65.72 Q132.2,66.83999999999999 134.4,65.16 Q136.0,65.19999999999999 136.0,67.39999999999999 Q136.0,69.6 132.2,69.08 Q128.9,68.24 127.25,69.64 Q126.19999999999999,69.6 126.19999999999999,67.39999999999999 Z" fill="#3b3a37" stroke="#55544f" stroke-width="1.2" />
<rect x="131" y="70.8" width="4.2" height="4" rx="0" fill="#55544f"/>
<path d="M143.0,67.39999999999999 Q143.0,65.19999999999999 146.25,65.72 Q149.0,66.83999999999999 151.20000000000002,65.16 Q152.8,65.19999999999999 152.8,67.39999999999999 Q152.8,69.6 149.0,69.08 Q145.70000000000002,68.24 144.05,69.64 Q143.0,69.6 143.0,67.39999999999999 Z" fill="#3b3a37" stroke="#55544f" stroke-width="1.2" />
<rect x="148" y="70.8" width="4.2" height="4" rx="0" fill="#55544f"/>
<path d="M159.6,67.39999999999999 Q159.6,65.19999999999999 162.85,65.72 Q165.6,66.83999999999999 167.8,65.16 Q169.4,65.19999999999999 169.4,67.39999999999999 Q169.4,69.6 165.6,69.08 Q162.3,68.24 160.65,69.64 Q159.6,69.6 159.6,67.39999999999999 Z" fill="#3b3a37" stroke="#55544f" stroke-width="1.2" />
<rect x="164.6" y="70.8" width="4.2" height="4" rx="0" fill="#55544f"/>
<line x1="160" y1="74.6" x2="163.4" y2="70.6" stroke="#55544f" stroke-width="0.8" stroke-linecap="butt"/>
<path d="M176.6,68.1 Q176.6,65.19999999999999 179.85,66.0 Q182.6,67.39999999999999 184.8,65.3 Q186.4,65.19999999999999 186.4,68.1 Q186.4,71.0 182.6,70.19999999999999 Q179.3,69.14999999999999 177.65,70.89999999999999 Q176.6,71.0 176.6,68.1 Z" fill="#55544f" />
<line x1="193.8" y1="73.4" x2="202" y2="66.2" stroke="#55544f" stroke-width="4.6" stroke-linecap="round"/>
<path d="M208.6,65 L211.4,73.6 L214.4,65" fill="none" stroke="#55544f" stroke-width="1" />
<rect x="215" y="64.8" width="5.6" height="1" rx="0" fill="#55544f"/>
<circle cx="217.4" cy="72.4" r="2.2" fill="none" stroke="#55544f" stroke-width="1"/>
<rect x="226.2" y="70.6" width="2" height="2" rx="0" fill="#55544f"/>
<rect x="229.6" y="65" width="1" height="10" rx="0" fill="#55544f"/>
<rect x="232.6" y="65.6" width="1" height="9" rx="0" fill="#55544f"/>
<rect x="225.6" y="68.6" width="10" height="0.9" rx="0" fill="#55544f"/>
<rect x="234.4" y="65" width="1.6" height="1.6" rx="0" fill="#55544f"/>
<circle cx="244.6" cy="68.4" r="2.6" fill="#55544f"/>
<circle cx="249.6" cy="68.4" r="2.6" fill="#55544f"/>
<circle cx="244.6" cy="68.4" r="1" fill="#2f2e2c"/>
<circle cx="249.6" cy="68.4" r="1" fill="#2f2e2c"/>
<rect x="246.6" y="66" width="0.8" height="9" rx="0" fill="#55544f"/>
<circle cx="261.6" cy="68.4" r="2.6" fill="#55544f"/>
<circle cx="266.6" cy="68.4" r="2.6" fill="#55544f"/>
<circle cx="261.6" cy="68.4" r="1" fill="#2f2e2c"/>
<circle cx="266.6" cy="68.4" r="1" fill="#2f2e2c"/>
<rect x="263.6" y="66" width="0.8" height="9" rx="0" fill="#55544f"/>
<circle cx="277.6" cy="68.4" r="2.4" fill="#55544f"/>
<circle cx="284" cy="68.4" r="2.4" fill="#55544f"/>
<circle cx="277.6" cy="68.4" r="0.9" fill="#2f2e2c"/>
<circle cx="284" cy="68.4" r="0.9" fill="#2f2e2c"/>
<rect x="292.4" y="64.6" width="4.8" height="2.8" rx="0" fill="#55544f"/>
<rect x="298.0" y="64.6" width="4.8" height="2.8" rx="0" fill="#55544f"/>
<rect x="292.4" y="68.19999999999999" width="4.8" height="2.8" rx="0" fill="#55544f"/>
<rect x="298.0" y="68.19999999999999" width="4.8" height="2.8" rx="0" fill="#55544f"/>
<rect x="292.4" y="71.8" width="4.8" height="2.8" rx="0" fill="#55544f"/>
<rect x="298.0" y="71.8" width="4.8" height="2.8" rx="0" fill="#55544f"/>
<path d="M314.6,64.4 L318.6,66.6 L314.6,68.6 Z" fill="#55544f" />
<path d="M314.6,69 L311.4,75.2 L318,75.2 Z" fill="none" stroke="#55544f" stroke-width="0.8" />
<rect x="314.2" y="64.4" width="0.8" height="5" rx="0" fill="#55544f"/>
<rect x="325.2" y="70.4" width="1.8" height="1.6" rx="0" fill="#d0d0d0"/>
<rect x="2" y="82.8" width="11" height="10.6" rx="0" fill="#f2f2f0" stroke="#555" stroke-width="0.3"/>
<rect x="2" y="82.8" width="7.8" height="7.6" rx="0" fill="#ecc92a"/>
<rect x="2.8" y="83.6" width="2.6" height="2.4" rx="0" fill="#f6e06a"/>
<rect x="5.8" y="86.8" width="2.6" height="2.4" rx="0" fill="#f6e06a"/>
<path d="M7.4,86.4 L7.4,93.6 L9.2,92 L10.6,94.8 L11.8,94.2 L10.4,91.6 L12.8,91.4 Z" fill="#f4f4f4" stroke="#333" stroke-width="0.4" />
<path d="M18.1,86.8 L21.1,86.8 L19.6,88.8 Z" fill="#c8c8c8" />
<rect x="26.6" y="83.6" width="8.2" height="7" rx="0" fill="#d6d6d6" stroke="#666" stroke-width="0.3"/>
<rect x="27.4" y="84.4" width="6.6" height="1.4" rx="0" fill="#eeeeee"/>
<rect x="27.4" y="86.6" width="6.6" height="0.6" rx="0" fill="#9a9a9a"/>
<rect x="28.4" y="87.4" width="8" height="6" rx="0" fill="#eecb2a" stroke="#7a6a20" stroke-width="0.3"/>
<path d="M42.1,86.8 L45.1,86.8 L43.6,88.8 Z" fill="#c8c8c8" />
<rect x="50" y="82.6" width="7" height="7" rx="0" fill="#e8c020" stroke="#7a6a20" stroke-width="0.3"/>
<rect x="52.6" y="85" width="7" height="7" rx="0" fill="#eccc30" stroke="#7a6a20" stroke-width="0.3"/>
<circle cx="59.6" cy="91.6" r="2.6" fill="#e02020" stroke="#fff" stroke-width="0.5"/>
<rect x="58.2" y="91.1" width="2.8" height="1" rx="0" fill="#fff"/>
<path d="M66.1,86.8 L69.1,86.8 L67.6,88.8 Z" fill="#c8c8c8" />
<rect x="0" y="110.2" width="6" height="6.6" rx="0" fill="#e8e8e8" stroke="#555" stroke-width="0.3"/>
<circle cx="5.6" cy="116.6" r="1.6" fill="#3a9a4a"/>
<path d="M12.8,113.4 A3.3,3.3 0 0 1 18.4,111.4" fill="none" stroke="#3a86d0" stroke-width="1.4" />
<path d="M19.4,114.2 A3.3,3.3 0 0 1 13.8,116.2" fill="none" stroke="#3a86d0" stroke-width="1.4" />
<path d="M17,109.8 L20.2,110.6 L18.8,113.2 Z" fill="#3a86d0" />
<path d="M15.2,117.8 L12,117 L13.4,114.4 Z" fill="#3a86d0" />
<path d="M25,110 L32.2,110 L29.4,113.6 L29.4,117.8 L27.8,117.8 L27.8,113.6 Z" fill="#4a8ad0" />
<rect x="25" y="110" width="7.2" height="1.2" rx="0" fill="#e8d040"/>
<rect x="38" y="110.2" width="2.4" height="7.4" rx="0" fill="#9a9a9a"/>
<rect x="38.6" y="111.6" width="1.2" height="1.2" rx="0" fill="#e89020"/>
<rect x="38.6" y="114.6" width="1.2" height="1.2" rx="0" fill="#e89020"/>
<rect x="41.4" y="110.2" width="3.6" height="1" rx="0" fill="#4a8ad0"/>
<rect x="42.8" y="110.2" width="1" height="7.4" rx="0" fill="#4a8ad0"/>
<circle cx="53.6" cy="113.8" r="3.6" fill="#4a8ad0"/>
<rect x="53.1" y="113" width="1" height="2.8" rx="0" fill="#e8f0f8"/>
<rect x="53.1" y="111.6" width="1" height="0.8" rx="0" fill="#e8f0f8"/>
<path d="M0,301 L3,298.6 L5,300.6 L2.4,303.6 Z" fill="#e8b020" />
<line x1="3.6" y1="300.4" x2="7" y2="296.8" stroke="#4a8ad0" stroke-width="1.2" stroke-linecap="butt"/>
<rect x="0.4" y="302" width="2.4" height="2" rx="0" fill="#d03030"/>
<rect x="13.6" y="297" width="5" height="6.6" rx="0" fill="#d8d8d8" stroke="#555" stroke-width="0.3"/>
<rect x="15.6" y="296.4" width="3" height="3" rx="0" fill="#aaa"/>
<circle cx="19.4" cy="303" r="1.3" fill="#3a9a4a"/>
<ellipse cx="29" cy="300.4" rx="3.8" ry="2.3" fill="#e8e8e8" stroke="#555" stroke-width="0.3"/>
<circle cx="29" cy="300.4" r="1.4" fill="#4a8ad0"/>
<path d="M38,296.6 L45,296.6 L42.4,300 L42.4,304 L40.8,304 L40.8,300 Z" fill="#4a8ad0" />
<rect x="38" y="296.6" width="7" height="1.1" rx="0" fill="#e8d040"/>
<rect x="43.2" y="302.6" width="1.4" height="1.4" rx="0" fill="#9a9a9a"/>
<rect x="52" y="297.4" width="4" height="4.4" rx="0" fill="#3a3a38"/>
<rect x="54" y="301" width="3.6" height="3.4" rx="0" fill="#484846"/>
<path d="M62.1,299.2 L65.1,299.2 L63.6,301.2 Z" fill="#c8c8c8" />
<rect x="70.4" y="297" width="2.4" height="7" rx="0" fill="#9a9a9a"/>
<rect x="71" y="298.4" width="1.2" height="1.2" rx="0" fill="#e89020"/>
<rect x="71" y="301.4" width="1.2" height="1.2" rx="0" fill="#e89020"/>
<path d="M74,297 L74,302.4 L72.8,302.4 L74.6,304.4 L76.4,302.4 L75.2,302.4 L75.2,297 Z" fill="#4a8ad0" />
<rect x="83" y="297" width="2.4" height="7" rx="0" fill="#9a9a9a"/>
<rect x="83.6" y="298.4" width="1.2" height="1.2" rx="0" fill="#e89020"/>
<rect x="83.6" y="301.4" width="1.2" height="1.2" rx="0" fill="#e89020"/>
<path d="M86.6,304 L86.6,298.6 L85.4,298.6 L87.2,296.6 L89,298.6 L87.8,298.6 L87.8,304 Z" fill="#4a8ad0" />
<rect x="95.2" y="296.8" width="6.6" height="6.6" rx="0" fill="#eeeeee" stroke="#555" stroke-width="0.3"/>
<circle cx="101.4" cy="303.2" r="1.7" fill="#d02020"/>
<path d="M1.4,136.35 L3.4,137.65 L1.4,138.95000000000002 Z" fill="#9a9a9a" />
<path d="M1.4,146.39999999999998 L3.4,147.7 L1.4,149.0 Z" fill="#9a9a9a" />
<path d="M1.4,156.45 L3.4,157.75 L1.4,159.05 Z" fill="#9a9a9a" />
<path d="M1.4,166.5 L3.4,167.8 L1.4,169.10000000000002 Z" fill="#9a9a9a" />
<path d="M1.4,246.89999999999998 L3.4,248.2 L1.4,249.5 Z" fill="#9a9a9a" />
<path d="M11.6,123.8 L12.6,126.39999999999999 L15.4,126.39999999999999 L13.2,128.2 L14,131.0 L11.6,129.4 L9.2,131.0 L10,128.2 L7.8,126.39999999999999 L10.6,126.39999999999999 Z" fill="#f2d020" stroke="#8a7010" stroke-width="0.3" />
<rect x="8.6" y="134.25" width="6.6" height="7" rx="0" fill="#e8e8e8" stroke="#666" stroke-width="0.3"/>
<rect x="11.6" y="134.25" width="1.6" height="3.4" rx="0" fill="#4a8ad0"/>
<rect x="8.4" y="144.5" width="7" height="6.6" rx="0" fill="#d8d850" stroke="#555" stroke-width="0.3"/>
<rect x="10" y="146.1" width="4" height="3.4" rx="0" fill="#3a9a3a"/>
<rect x="8.4" y="154.55" width="7" height="6.6" rx="0" fill="#e8e8e8" stroke="#555" stroke-width="0.3"/>
<circle cx="11.9" cy="157.95" r="1.5" fill="none" stroke="#555" stroke-width="0.6"/>
<path d="M8.4,164.8 L11,164.8 L11.8,165.60000000000002 L15.4,165.60000000000002 L15.4,171.0 L8.4,171.0 Z" fill="#e8e8e8" stroke="#666" stroke-width="0.3" />
<path d="M8,177.85 L11.8,176.04999999999998 L15.6,177.85 L15.6,180.85 L11.8,181.85 L8,180.85 Z" fill="#e8b820" />
<circle cx="11.8" cy="176.45" r="2.6" fill="#7ab0e0" stroke="#3a6aa0" stroke-width="0.3"/>
<path d="M8.4,191.5 Q9.6,186.3 15.2,184.3 Q14,188.5 8.4,191.5 Z" fill="#5a9ad8" />
<path d="M8.6,194.95 Q11.8,193.95 15,194.95 L14.4,198.54999999999998 Q13,199.35 12.6,201.54999999999998 L11.2,201.54999999999998 Q10.6,199.35 9.2,198.54999999999998 Z" fill="#4a86c8" />
<rect x="9.8" y="195.35" width="4.2" height="0.6" rx="0" fill="#2a5a90"/>
<path d="M8.4,204.4 L15.6,207.4 L9.6,208.2 L13.6,211.6 L8.4,209.6 Z" fill="#4a86c8" />
<rect x="8.4" y="214.65" width="7" height="6.8" rx="0.8" fill="#4a86c8"/>
<rect x="9.6" y="217.25" width="4.6" height="1.6" rx="0" fill="#a8c8e8"/>
<circle cx="11.9" cy="228.1" r="3.5" fill="#6aa0d8"/>
<path d="M9.6,226.7 Q11.8,225.5 13.8,227.1 Q12.4,228.7 10.6,230.5" fill="none" stroke="#e8f0f8" stroke-width="0.8" />
<rect x="8.4" y="234.55" width="2.1" height="2.1" rx="0" fill="#d0e0f0"/>
<rect x="10.9" y="234.55" width="2.1" height="2.1" rx="0" fill="#d0e0f0"/>
<rect x="13.4" y="234.55" width="2.1" height="2.1" rx="0" fill="#d0e0f0"/>
<rect x="8.4" y="237.05" width="2.1" height="2.1" rx="0" fill="#d0e0f0"/>
<rect x="10.9" y="237.05" width="2.1" height="2.1" rx="0" fill="#d0e0f0"/>
<rect x="13.4" y="237.05" width="2.1" height="2.1" rx="0" fill="#d0e0f0"/>
<rect x="8.4" y="239.55" width="2.1" height="2.1" rx="0" fill="#d0e0f0"/>
<rect x="10.9" y="239.55" width="2.1" height="2.1" rx="0" fill="#d0e0f0"/>
<rect x="13.4" y="239.55" width="2.1" height="2.1" rx="0" fill="#d0e0f0"/>
<rect x="8.4" y="244.6" width="2.1" height="2.1" rx="0" fill="#5a90d4"/>
<rect x="10.9" y="244.6" width="2.1" height="2.1" rx="0" fill="#5a90d4"/>
<rect x="13.4" y="244.6" width="2.1" height="2.1" rx="0" fill="#5a90d4"/>
<rect x="8.4" y="247.1" width="2.1" height="2.1" rx="0" fill="#5a90d4"/>
<rect x="10.9" y="247.1" width="2.1" height="2.1" rx="0" fill="#5a90d4"/>
<rect x="13.4" y="247.1" width="2.1" height="2.1" rx="0" fill="#5a90d4"/>
<rect x="8.4" y="249.6" width="2.1" height="2.1" rx="0" fill="#5a90d4"/>
<rect x="10.9" y="249.6" width="2.1" height="2.1" rx="0" fill="#5a90d4"/>
<rect x="13.4" y="249.6" width="2.1" height="2.1" rx="0" fill="#5a90d4"/>
<path d="M8.4,256.65 L11.9,254.85 L15.4,256.65 L15.4,259.85 L11.9,261.65 L8.4,259.85 Z" fill="#7aacd8" />
<circle cx="11.9" cy="258.25" r="1.2" fill="#2a5a8a"/>
<circle cx="11.9" cy="268.3" r="3.2" fill="#34485c" stroke="#5a80a8" stroke-width="0.6"/>
<line x1="11.9" y1="265.3" x2="11.9" y2="271.3" stroke="#5a80a8" stroke-width="0.4" stroke-linecap="butt"/>
<ellipse cx="11.9" cy="268.3" rx="1.4" ry="3" fill="none" stroke="#5a80a8" stroke-width="0.4"/>
<circle cx="11.9" cy="278.35" r="3.2" fill="#34485c" stroke="#5a80a8" stroke-width="0.6"/>
<line x1="11.9" y1="275.35" x2="11.9" y2="281.35" stroke="#5a80a8" stroke-width="0.4" stroke-linecap="butt"/>
<ellipse cx="11.9" cy="278.35" rx="1.4" ry="3" fill="none" stroke="#5a80a8" stroke-width="0.4"/>
<ellipse cx="12" cy="315.6" rx="4.3" ry="2.9" fill="#e8e8e8" stroke="#333" stroke-width="0.4"/>
<circle cx="10.6" cy="315.70000000000005" r="0.8" fill="#4a4a4a"/>
<circle cx="13.3" cy="315.5" r="0.8" fill="#4a4a4a"/>
<ellipse cx="12" cy="328.9" rx="4.3" ry="2.9" fill="#e8e8e8" stroke="#333" stroke-width="0.4"/>
<circle cx="10.6" cy="329.0" r="0.8" fill="#4a4a4a"/>
<circle cx="13.3" cy="328.79999999999995" r="0.8" fill="#4a4a4a"/>
<ellipse cx="12" cy="342" rx="4.3" ry="2.9" fill="#e8e8e8" stroke="#333" stroke-width="0.4"/>
<circle cx="10.6" cy="342.1" r="0.8" fill="#4a4a4a"/>
<circle cx="13.3" cy="341.9" r="0.8" fill="#4a4a4a"/>
<ellipse cx="12" cy="355.2" rx="4.3" ry="2.9" fill="#e8e8e8" stroke="#333" stroke-width="0.4"/>
<circle cx="10.6" cy="355.3" r="0.8" fill="#4a4a4a"/>
<circle cx="13.3" cy="355.09999999999997" r="0.8" fill="#4a4a4a"/>
<line x1="19" y1="315.6" x2="27" y2="315.6" stroke="#7a4a8e" stroke-width="0.9" stroke-linecap="butt"/>
<line x1="19" y1="315.6" x2="27" y2="315.6" stroke="#2a2a2a" stroke-width="1" stroke-dasharray="0.6 1.4"/>
<circle cx="22.8" cy="328.9" r="1.3" fill="#c6d63e" stroke="#5a6020" stroke-width="0.3"/>
<circle cx="22.8" cy="342" r="1.2" fill="#c83a8a" stroke="#5a2040" stroke-width="0.3"/>
<rect x="19" y="351.6" width="7.6" height="7.2" rx="0" fill="#e8b830" stroke="#9a7a20" stroke-width="0.3"/>
<!-- title bar icons -->
<circle cx="4.2" cy="4.3" r="3.6" fill="none" stroke="#4c9a2c" stroke-width="1.6"/>
<path d="M5.8,6 L8.4,8.6" stroke="#5aa830" stroke-width="1.6"/>
<circle cx="3.6" cy="3.8" r="1.5" fill="#e07a2a"/>
<path d="M3.8,4 L6.2,6.4" stroke="#d8b020" stroke-width="0.8"/>
<path d="M15.2,1.2 L18.4,4.4" stroke="#e4e4e4" stroke-width="1.8"/>
<path d="M13.4,3.2 L16.8,6.6" stroke="#e4e4e4" stroke-width="1"/>
<path d="M15,2.6 L16.4,1.4" stroke="#e4e4e4" stroke-width="0.8"/>
<path d="M14.6,5.4 L12,8" stroke="#d0d0d0" stroke-width="0.7"/>
<path d="M768.2,2.6 L771.2,5.8 L774.2,2.6" stroke="#e0e0e0" stroke-width="0.8" fill="none"/>
<path d="M783.2,1.4 L786,4 L783.2,6.6 L780.4,4 Z" stroke="#e0e0e0" stroke-width="0.8" fill="none"/>
<circle cx="795.2" cy="4.2" r="4.7" fill="#f2f2f2"/>
<path d="M793.4,2.4 L797,6 M797,2.4 L793.4,6" stroke="#30343a" stroke-width="0.8"/>
<!-- cursor -->
<path d="M83.8,358.6 L83.8,366.2 L85.8,364.9 L87.6,367.8 L88.8,367.1 L87.2,364.4 L89.6,364.2 Z" fill="#3a3a39" stroke="#c4c4c2" stroke-width="0.75"/>
</svg>
<!-- status bar -->
<div class="a" style="left:0;top:434px;width:800px;height:15px;background:#2e2e2c"></div>
<div class="a" style="left:0;top:434.3px;width:118px;height:14.7px;background:#272725"></div>
<div class="a" style="left:0;top:436.3px;width:116.3px;height:11.5px;background:#8a8a86;border-top:0.7px solid #a2a29e;border-bottom:0.5px solid #5a5a56"></div>
<svg width="800" height="449"><circle cx="4.6" cy="441.6" r="2" fill="none" stroke="#9c9c98" stroke-width="0.7"/><line x1="6" y1="443" x2="7.4" y2="444.4" stroke="#9c9c98" stroke-width="0.7"/></svg>
<span class="t" style="left:13px;top:437.8px;font-size:6.8px;color:#5c5c58">Type to locate (Ctrl+K)</span>
<span class="t st" style="left:394px;color:#a0a09e">Coordinate</span>
<div class="a" style="left:421.6px;top:436.8px;width:43.9px;height:10.4px;background:#8e8e8a;border:0.7px solid #262624"></div>
<span class="t st" style="left:425.4px;color:#2c2c2a">-1.5354,0.5034</span>
<span class="t st" style="left:482.4px;color:#a0a09e">Scale</span>
<div class="a" style="left:497px;top:436.5px;width:50.7px;height:11.4px;background:#454543;border:0.7px solid #262624"></div>
<span class="t st" style="left:500.5px;color:#9a9ea4">1:72778</span>
<span class="t st" style="left:564.6px;color:#a0a09e">Magnifier</span>
<div class="a" style="left:590px;top:436.5px;width:45px;height:11.4px;background:#454543;border:0.7px solid #262624"></div>
<span class="t st" style="left:592px;color:#9a9a98">100%</span>
<span class="t st" style="left:640px;color:#a0a09e">Rotation</span>
<div class="a" style="left:665.2px;top:436.5px;width:44px;height:11.4px;background:#454543;border:0.7px solid #262624"></div>
<span class="t st" style="left:667.4px;color:#9a9a98">0.0 °</span>
<div class="a" style="left:712.9px;top:438.7px;width:7.2px;height:7.3px;background:#0b7a0b"></div>
<span class="t st" style="left:722.9px;color:#a0a09e">Render</span>
<span class="t st" style="left:754px;color:#a0a09e">EPSG:4326</span>
<svg width="800" height="449">
<path d="M543.2,441.4 L545.8,441.4 L544.5,443.2 Z" fill="#d0d0ce"/>
<path d="M631.6,439 L632.9,440.8 L630.3,440.8 Z M631.6,445.8 L632.9,444 L630.3,444 Z" fill="#c8c8c6"/>
<path d="M705.2,439 L706.5,440.8 L703.9,440.8 Z M705.2,445.8 L706.5,444 L703.9,444 Z" fill="#c8c8c6"/>
<circle cx="472.6" cy="441.6" r="2.6" fill="#d8d8d8"/><circle cx="474" cy="443.4" r="2" fill="#cfcfcf" stroke="#444" stroke-width="0.3"/>
<rect x="554.6" y="442" width="5" height="4" fill="#b8b8b6"/><path d="M555.6,442 L555.6,441 A1.5,1.5 0 0 1 558.6,441 L558.6,442" stroke="#b8b8b6" stroke-width="0.8" fill="none"/>
<circle cx="749.8" cy="441.6" r="3.2" fill="#d0d0d0"/><path d="M747,441.6 L752.6,441.6 M749.8,438.6 L749.8,444.6" stroke="#8a8a8a" stroke-width="0.4"/>
<circle cx="795.6" cy="441.8" r="3.5" fill="#c4c4c2"/><path d="M793.6,444.6 L792.8,446.6 L795,445.2 Z" fill="#c4c4c2"/><rect x="793.6" y="441.4" width="4" height="0.8" fill="#555"/>
</svg>
</body></html>
